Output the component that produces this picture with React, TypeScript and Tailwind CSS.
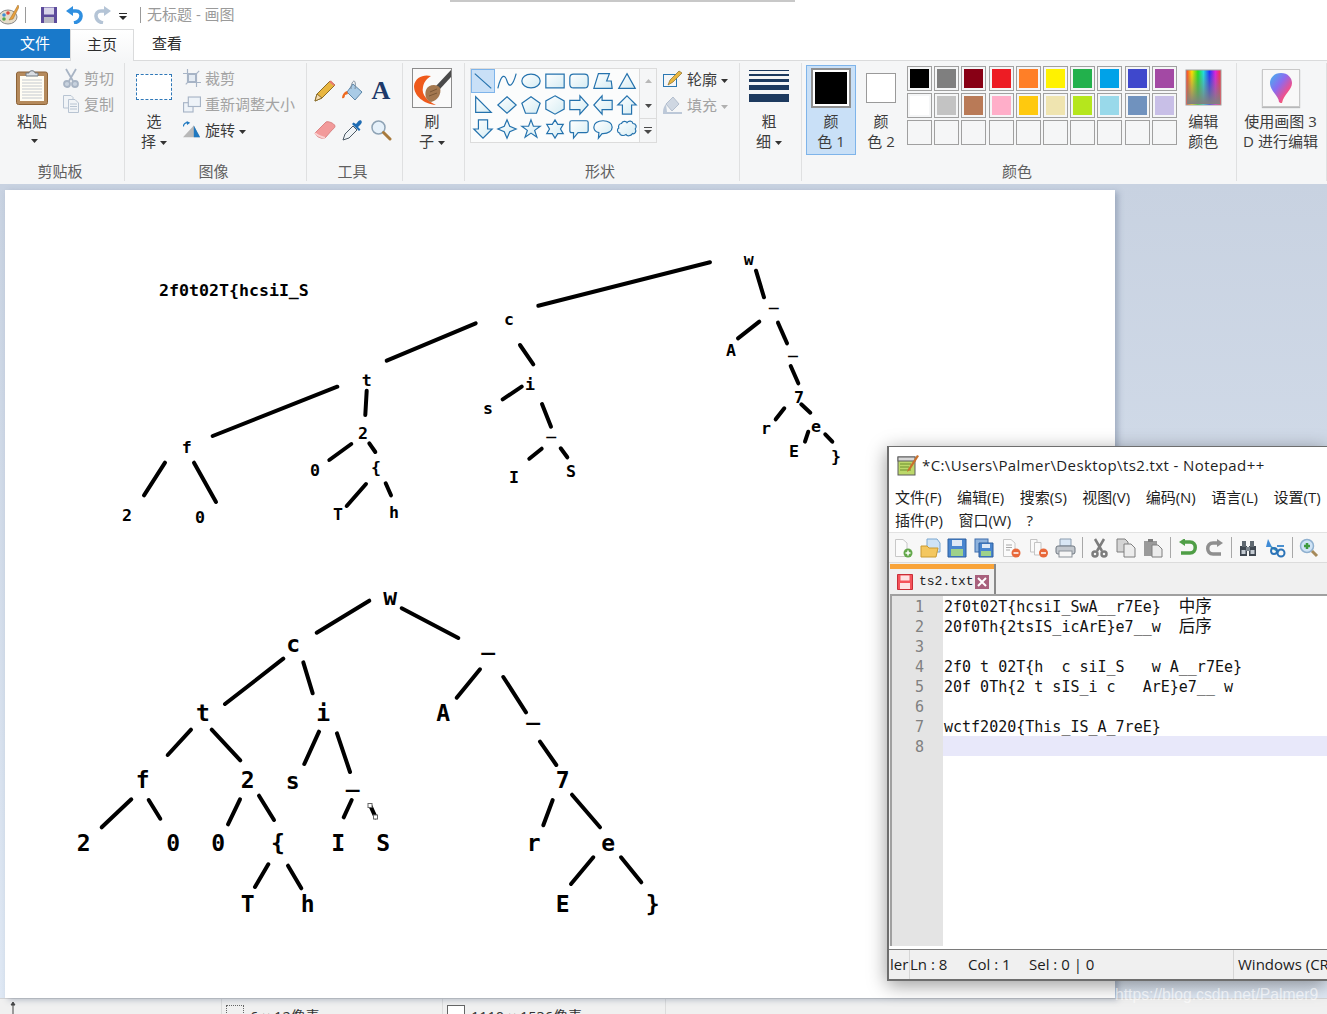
import { ReactNode } from "react"

const SHAPE_STROKE = "#2472ad"

const palette = [
  "#000000", "#7f7f7f", "#880015", "#ed1c24", "#ff7f27", "#fff200", "#22b14c", "#00a2e8", "#3f48cc", "#a349a4",
  "#ffffff", "#c3c3c3", "#b97a57", "#ffaec9", "#ffc90e", "#efe4b0", "#b5e61d", "#99d9ea", "#7092be", "#c8bfe7",
]

const shapes = [
  "M3 4L21 20",
  "M2 20C6 3 10 5 12 12S18 19 22 4",
  "M12 4.5C18 4.5 22 8 22 12S18 19.5 12 19.5 2 16 2 12 6 4.5 12 4.5Z",
  "M2 4.5H22V19.5H2Z",
  "M6 4.5H18Q22 4.5 22 8.5V15.5Q22 19.5 18 19.5H6Q2 19.5 2 15.5V8.5Q2 4.5 6 4.5Z",
  "M2 20L7 4H19L16 12H21L22 20Z",
  "M12 4L21 20H3Z",
  "M4 3V20H21Z",
  "M12 3L22 12L12 21L2 12Z",
  "M12 3L22 10L18 21H6L2 10Z",
  "M12 2L22 7.5V16.5L12 22L2 16.5V7.5Z",
  "M2 7H13V2L22 12L13 22V17H2Z",
  "M22 7H11V2L2 12L11 22V17H22Z",
  "M12 2L22 12H17V22H7V12H2Z",
  "M7 2H17V12H22L12 22L2 12H7Z",
  "M12 2L15 9L22 12L15 15L12 22L9 15L2 12L9 9Z",
  "M12 2L14.6 9H22L16 13.5L18.5 21L12 16.5L5.5 21L8 13.5L2 9H9.4Z",
  "M12 2L15 7H21L18 12L21 17H15L12 22L9 17H3L6 12L3 7H9Z",
  "M4 3H20Q22 3 22 5V14Q22 16 20 16H11L6 22V16H4Q2 16 2 14V5Q2 3 4 3Z",
  "M12 3C18 3 22 6 22 10S18 17 12 17H11L7 22L7.5 16C4 15 2 13 2 10 2 6 6 3 12 3Z",
  "M6 6C7 3 11 3 12 5 14 2.500 18 3 18.500 6 22 6 23 10 21 12 23 15 20 18 18 17 16 20 12 20 11 18 8 20 4 19 4 16.500 1 16 1 12 3 11 2 8 4 6 6 6Z",
]

const lines = [
  // first tree
  [475.7, 323.3, 386.7, 360.7], [337.3, 386.7, 212.7, 436], [366.7, 390.7, 365.3, 415],
  [165, 462.7, 144, 495.3], [194, 462.7, 216, 502], [351.3, 444, 329.3, 460],
  [369.3, 443.3, 375.3, 452], [366, 484, 346.7, 506], [385.7, 483.3, 391, 495.3],
  [710, 262.3, 538.3, 305.7], [756, 270.7, 764, 297.3], [759.3, 321.7, 738, 338.3],
  [778, 322.7, 787, 343.3], [790.7, 366, 798.3, 383.3], [520, 345, 533.3, 364.3],
  [521.7, 386.7, 502.7, 399.3], [542, 404, 551, 426.7], [541.7, 448.7, 529.3, 458.7],
  [560.7, 448.3, 567.3, 457.3], [784.3, 408.3, 775.7, 419.3], [801.3, 404.3, 810.3, 412.7],
  [808.3, 431.7, 805, 441.7], [825.3, 434.3, 832.3, 441.7],
  // second tree
  [369.3, 600.7, 316.7, 632.7], [283.3, 658.7, 225, 704], [303.3, 662.3, 312.7, 693.3],
  [191, 729.7, 167.7, 755], [211.7, 729.7, 240.3, 760.3], [319, 731.7, 304.3, 764],
  [337, 733.3, 350, 772], [131.3, 799.3, 101.7, 827.3], [148.7, 800, 160.3, 818.7],
  [240, 799.3, 228, 824.3], [259, 795.7, 274, 820], [351.7, 800, 343.7, 817.3],
  [370.3, 805.7, 375.7, 817.3], [268.3, 864.3, 255, 887], [288, 865.7, 301.3, 888.3],
  [401.7, 608.3, 458.3, 638], [480, 669.3, 456.7, 697.7], [503.3, 677, 526, 712.3],
  [540, 741.7, 556.3, 765], [552.7, 800, 543.3, 825.3], [572, 794.7, 600, 827.3],
  [593.3, 857.3, 571, 884], [621, 857.3, 641.3, 882.3],
]

const smallLabels: [string, number, number][] = [
  ["w", 748.7, 259], ["_", 773.7, 300], ["c", 509, 319], ["t", 366.7, 380], ["f", 186.7, 447],
  ["2", 363, 433], ["0", 315, 470], ["{", 376, 467], ["2", 127, 515], ["0", 200, 517],
  ["T", 338, 514], ["h", 394, 512], ["i", 530, 384], ["s", 488, 408], ["_", 551.3, 429],
  ["I", 514, 477], ["S", 571, 471], ["A", 731, 350], ["_", 793, 348], ["7", 799, 397],
  ["r", 766, 428], ["e", 816, 426], ["E", 794, 451], ["}", 836, 456],
]

const bigLabels: [string, number, number][] = [
  ["w", 390.3, 597], ["c", 293.3, 644], ["t", 203, 713], ["i", 323.3, 713], ["f", 142.7, 780],
  ["2", 247.7, 780], ["s", 292.7, 781], ["_", 352.7, 779], ["2", 83.7, 843], ["0", 173.3, 843],
  ["0", 218.3, 843], ["{", 278, 843], ["I", 338.3, 843], ["S", 383.3, 843], ["T", 247.7, 904],
  ["h", 307.7, 904], ["_", 488.3, 642], ["A", 443.3, 713], ["_", 533.3, 712], ["7", 562.7, 780],
  ["r", 533.7, 843], ["e", 608.3, 843], ["E", 562.7, 904], ["}", 652.7, 904],
]

const editorLines = [
  ["2f0t02T{hcsiI_SwA__r7Ee}  ", "中序"],
  ["20f0Th{2tsIS_icArE}e7__w  ", "后序"],
  [""],
  ["2f0 t 02T{h  c siI_S   w A__r7Ee}"],
  ["20f 0Th{2 t sIS_i c   ArE}e7__ w"],
  [""],
  ["wctf2020{This_IS_A_7reE}"],
  [""],
]

function Caret({ off }: { off?: boolean }) {
  return (
    <svg width="7" height="4" viewBox="0 0 7 4" className="inline-block ml-[4px] align-middle">
      <path d="M0 0H7L3.500 4Z" fill={off ? "#b0b0b0" : "#333333"} />
    </svg>
  )
}

function Group({ w, label, children }: { w: string; label: string; children: ReactNode }) {
  return (
    <div className={`${w} h-[118px] shrink-0 flex flex-col border-r border-[#dfe0e1]`}>
      <div className="h-[98px] flex">{children}</div>
      <div className="h-[20px] leading-[20px] text-center pr-[4px] text-[15px] text-[#5f5f5f]">{label}</div>
    </div>
  )
}

function TwoLines({ a, b, caret }: { a: string; b: string; caret?: boolean }) {
  return (
    <div className="text-center text-[15px] leading-[20px] text-[#3c3c3c] whitespace-nowrap">
      <div className="h-[20px]">{a}</div>
      <div className="h-[20px]">{b}{caret && <Caret />}</div>
    </div>
  )
}

function SmallRow({ icon, text, off, caret, wide }: { icon: ReactNode; text: string; off?: boolean; caret?: boolean; wide?: boolean }) {
  return (
    <div className={`h-[26px] flex items-center gap-[4px] text-[15px] whitespace-nowrap ${off ? "text-[#a3a3a3]" : "text-[#3c3c3c]"}`}>
      <span className={`${wide ? "w-[20px]" : "w-[18px]"} h-[18px] flex items-center justify-center shrink-0`}>{icon}</span>
      <span>{text}{caret && <Caret off={off} />}</span>
    </div>
  )
}

function Swatch({ color }: { color?: string }) {
  return (
    <div className="w-[25px] h-[25px] border border-[#a0a0a0] p-[2px]">
      {color && <div className="w-full h-full" style={{ backgroundColor: color }} />}
    </div>
  )
}

function Clipboard() {
  return (
    <svg width="32" height="36" viewBox="0 0 32 36">
      <rect x="0.500" y="3" width="31" height="32.500" rx="2" fill="#b58a5c" stroke="#8c6236" />
      <rect x="4" y="7" width="24" height="25" fill="#fffdf4" />
      <path d="M6 11H26M6 14H26M6 17H26M6 20H26M6 23H26M6 26H26M6 29H26" stroke="#c4c9cf" />
      <path d="M10 7V4H13C13 1 19 1 19 4H22V7Z" fill="#d9dde2" stroke="#6f7880" />
    </svg>
  )
}

function Scissors() {
  return (
    <svg width="16" height="20" viewBox="0 0 16 20" fill="none" stroke="#a8b4c4" strokeWidth="1.800">
      <path d="M3 1L10 13M13 1L6 13" />
      <circle cx="4" cy="16" r="3" fill="#c8d2de" />
      <circle cx="12" cy="16" r="3" fill="#c8d2de" />
    </svg>
  )
}

function CopyPages() {
  return (
    <svg width="18" height="20" viewBox="0 0 18 20" fill="#f1f4f7" stroke="#b8c4d2">
      <path d="M1.500 1.500H9L11 3.500V14H1.500Z" />
      <path d="M6.500 5.500H13L16.500 9V18.500H6.500Z" />
      <path d="M8 10H15M8 12.500H15M8 15H15" />
    </svg>
  )
}

function CropIcon() {
  return (
    <svg width="20" height="20" viewBox="0 0 20 20" fill="none" stroke="#a7b4c6" strokeWidth="1.300">
      <path d="M5 0V15H20M0 5H15V20" />
      <path d="M3 17L18 2" />
      <path d="M6 6H14V14H6Z" fill="#e4ebf3" />
    </svg>
  )
}

function ResizeIcon() {
  return (
    <svg width="19" height="17" viewBox="0 0 19 17" fill="#eef3f8" stroke="#a7b4c6" strokeWidth="1.200">
      <rect x="0.600" y="6.600" width="10" height="9.800" />
      <rect x="5.600" y="0.600" width="12.800" height="10" />
    </svg>
  )
}

function RotateIcon() {
  return (
    <svg width="20" height="20" viewBox="0 0 20 20">
      <path d="M19 18H0L12 5Z" fill="#b8b8b8" />
      <path d="M12 5L19 18H12Z" fill="#1f78c0" />
      <path d="M0.500 6C0.500 3 3 1.500 5.500 2" fill="none" stroke="#1f78c0" strokeWidth="1.300" />
      <path d="M4 0L8 2L4.500 4.500Z" fill="#1f78c0" />
    </svg>
  )
}

function PencilTool() {
  return (
    <svg width="22" height="22" viewBox="0 0 22 22">
      <path d="M1 21L3 14L16 1L21 5L8 18Z" fill="#e8b640" stroke="#8a6d2b" />
      <path d="M1 21L3 14L8 18Z" fill="#f5dcb0" stroke="#8a6d2b" />
      <path d="M15 2L20 6L21 5L17 0.500Z" fill="#e87a72" />
    </svg>
  )
}

function FillTool() {
  return (
    <svg width="22" height="22" viewBox="0 0 22 22">
      <path d="M11 4L20 12L13 20L5 12Z" fill="#a9cbe6" stroke="#5c86a8" />
      <path d="M9 9C9 4 11 1 12 1S14 4 13 9" fill="none" stroke="#7d8b99" />
      <path d="M5 11C2 12 0 15 0 18 2 19 3 17 3 15L6 14Z" fill="#ef6a1f" />
    </svg>
  )
}

function PickerTool() {
  return (
    <svg width="22" height="22" viewBox="0 0 22 22">
      <path d="M1 21L3 15L11 7L15 11L7 19Z" fill="#eff3f6" stroke="#4b5965" />
      <path d="M10 5L17 12L18.500 10.500L16 8L19 5C21 3 19 0 16.500 2L14 5L11.500 3.500Z" fill="#1f6cb3" />
    </svg>
  )
}

function MagnifierTool() {
  return (
    <svg width="22" height="22" viewBox="0 0 22 22" fill="none">
      <circle cx="8.500" cy="8.500" r="6.500" fill="#e6f1fa" stroke="#8ea3b5" strokeWidth="1.500" />
      <path d="M13.500 13.500L20 20" stroke="#a87a3c" strokeWidth="3" strokeLinecap="round" />
    </svg>
  )
}

function EraserTool() {
  return (
    <svg width="22" height="20" viewBox="0 0 22 20">
      <path d="M1 13L12 2C14 1 20 3 21 6C21 8 19 9 18 10L11 18C8 19 2 17 1 13Z" fill="#f29a9a" stroke="#d98383" />
      <path d="M1 13C3 16 8 17 11 18" fill="none" stroke="#fbd0d0" strokeWidth="2" />
    </svg>
  )
}

function BrushIcon() {
  return (
    <svg width="40" height="40" viewBox="0 0 40 40">
      <rect x="0.500" y="0.500" width="39" height="39" fill="#fafafa" stroke="#8c8c8c" />
      <path d="M39 2L24 18L28 21L39 9Z" fill="#4a4a4a" />
      <path d="M19 8C12 6 3 9 2 18C2 28 12 36 24 37C16 33 9 27 11 19C12 13 16 10 19 8Z" fill="#ef5a1c" />
      <path d="M14 22C16 17 24 15 28 20C30 26 25 33 19 34C15 33 12 28 14 22Z" fill="#a4784f" />
      <path d="M18 24L25 21M17 28L25 25" stroke="#7c5836" />
    </svg>
  )
}

function Thickness() {
  return (
    <div className="w-[40px] flex flex-col">
      <div className="h-[1px] bg-[#1d3a5f]" />
      <div className="h-[2px] mt-[3px] bg-[#1d3a5f]" />
      <div className="h-[3px] mt-[3px] bg-[#1d3a5f]" />
      <div className="h-[5px] mt-[3px] bg-[#1d3a5f]" />
      <div className="h-[8px] mt-[4px] bg-[#1d3a5f]" />
    </div>
  )
}

function Balloon() {
  return (
    <svg width="24" height="32" viewBox="0 0 24 32">
      <defs>
        <linearGradient id="bal" x1="0" y1="0" x2="1" y2="1">
          <stop offset="0" stopColor="#3fb8ee" />
          <stop offset="0.400" stopColor="#8a6cf0" />
          <stop offset="0.700" stopColor="#ee4f8e" />
          <stop offset="1" stopColor="#f5a122" />
        </linearGradient>
      </defs>
      <path d="M12 1C19 1 23 6 23 11C23 18 15 22 13 31C12 31 11 31 10 30C10 24 1 19 1 11C1 6 5 1 12 1Z" fill="url(#bal)" />
    </svg>
  )
}

function PageIcon({ badge }: { badge?: string }) {
  return (
    <svg width="20" height="20" viewBox="0 0 20 20">
      <path d="M2.500 1.500H10L14 5V18.500H2.500Z" fill="#fbfbfb" stroke="#c8c8c8" />
      {badge === "red" && <path d="M5 7H11M5 9.500H11M5 12H9" stroke="#a8a8a8" />}
      <circle cx="15" cy="15" r="4.500" fill={badge === "red" ? "#e8683a" : "#63a84b"} />
      <path d={badge === "red" ? "M12.500 15H17.500" : "M12.500 15H17.500M15 12.500V17.500"} stroke="#fff" strokeWidth="1.500" />
    </svg>
  )
}

function Disk({ small }: { small?: boolean }) {
  return (
    <svg width="20" height="20" viewBox="0 0 20 20">
      {small && <rect x="1" y="1" width="13" height="13" fill="#8fb3dd" stroke="#3f6fae" />}
      <path d={small ? "M5 5H19V19H5Z" : "M1 1H19V19H1Z"} fill="#4a86cf" stroke="#2c5f9f" />
      <rect x={small ? 8 : 5} y={small ? 6 : 2} width={small ? 8 : 10} height={small ? 4 : 6} fill="#dfe9f5" />
      <rect x={small ? 7 : 4} y={small ? 13 : 11} width={small ? 10 : 12} height={small ? 5 : 7} fill="#9ed18a" />
    </svg>
  )
}

const toolbar: ReactNode[] = [
  <PageIcon />,
  <svg width="21" height="20" viewBox="0 0 21 20"><path d="M7 1H17L20 5V14H7Z" fill="#cfe3f6" stroke="#7ba7d0" /><path d="M1 8H7L9 10H18L16 19H1Z" fill="#f4c75f" stroke="#c99a32" /></svg>,
  <Disk />,
  <Disk small />,
  <PageIcon badge="red" />,
  <svg width="21" height="20" viewBox="0 0 21 20"><path d="M2.500 1.500H9V14H2.500Z" fill="#fafafa" stroke="#c4c4c4" /><path d="M6.500 4.500H13V17H6.500Z" fill="#fafafa" stroke="#c4c4c4" /><circle cx="15.500" cy="15" r="4.500" fill="#e8683a" /><path d="M13 15H18" stroke="#fff" strokeWidth="1.500" /></svg>,
  <svg width="21" height="20" viewBox="0 0 21 20"><path d="M5 1H16V8H5Z" fill="#d9e7f5" stroke="#8b9cae" /><rect x="1" y="8" width="19" height="8" rx="2" fill="#c3c8ce" stroke="#6f7780" /><rect x="4" y="13" width="13" height="6" fill="#f6f6f6" stroke="#8b9299" /></svg>,
  null,
  <svg width="17" height="20" viewBox="0 0 17 20" fill="none" stroke="#7d7d7d" strokeWidth="2.500"><path d="M13 1L6 13M4 1L11 13" /><circle cx="4" cy="16" r="2.500" /><circle cx="13" cy="16" r="2.500" /></svg>,
  <svg width="20" height="20" viewBox="0 0 20 20"><path d="M1 1H9L12 4V14H1Z" fill="#d4d4d4" stroke="#7f7f7f" /><path d="M8 6H15L19 10V19H8Z" fill="#ececec" stroke="#7f7f7f" /></svg>,
  <svg width="20" height="20" viewBox="0 0 20 20"><path d="M1 3H14V18H1Z" fill="#9a9a9a" /><path d="M5 1H10V4H5Z" fill="#7d7d7d" /><path d="M9 7H15L19 11V19H9Z" fill="#ececec" stroke="#7f7f7f" /></svg>,
  null,
  <svg width="19" height="18" viewBox="0 0 19 18" fill="none"><path d="M5 3H12C19 3 19 14 12 14H3" stroke="#4f9e46" strokeWidth="3.500" /><path d="M7 -1V7L1 3Z" fill="#4f9e46" /></svg>,
  <svg width="19" height="18" viewBox="0 0 19 18" fill="none"><path d="M14 4H8C1 4 1 15 8 15H16" stroke="#8f8f8f" strokeWidth="3.500" /><path d="M12 0V8L18 4Z" fill="#8f8f8f" /></svg>,
  null,
  <svg width="18" height="18" viewBox="0 0 18 18"><rect x="1" y="7" width="7" height="10" fill="#3f4750" /><rect x="10" y="7" width="7" height="10" fill="#3f4750" /><rect x="3" y="2" width="4" height="6" fill="#5f6870" /><rect x="11" y="2" width="4" height="6" fill="#5f6870" /><rect x="7" y="8" width="4" height="4" fill="#7f8890" /><rect x="2.500" y="11" width="4" height="4" fill="#c5ccd3" /><rect x="11.500" y="11" width="4" height="4" fill="#c5ccd3" /></svg>,
  <svg width="21" height="20" viewBox="0 0 21 20" fill="none"><path d="M3 1L7 9H1Z" fill="#3f8bd6" /><path d="M6 9L14 14" stroke="#3fa0b0" strokeWidth="2" /><circle cx="9" cy="13" r="3" stroke="#2c74b8" strokeWidth="2" /><circle cx="16" cy="15" r="3.500" stroke="#2c74b8" strokeWidth="2" /><path d="M12 8H19" stroke="#4a90d0" strokeWidth="2" /></svg>,
  null,
  <svg width="20" height="20" viewBox="0 0 20 20" fill="none"><circle cx="8" cy="8" r="6.500" fill="#cfe3f6" stroke="#8fb0cf" strokeWidth="1.500" /><path d="M13 13L18 18" stroke="#a68a5a" strokeWidth="3" /><path d="M5 8H11M8 5V11" stroke="#3f9a3f" strokeWidth="2.500" /></svg>,
]

function Notepad() {
  return (
    <div className="absolute left-[887px] top-[446px] w-[440px] h-[535px] flex flex-col bg-[#f0f0f0] border-l-2 border-t border-b-2 border-[#6e6e6e] shadow-[0_4px_18px_rgba(0,0,0,0.4)] overflow-hidden">
      <div className="h-[38px] shrink-0 bg-white flex items-center pl-[8px] gap-[3px] pb-[2px]">
        <svg width="22" height="22" viewBox="0 0 22 22">
          <rect x="1" y="3" width="17" height="18" fill="#bcd86a" stroke="#5c5c5c" />
          <rect x="1" y="3" width="17" height="4" fill="#d8d8d8" stroke="#5c5c5c" />
          <path d="M3 10H14M3 13H12M3 16H14" stroke="#6b8f2c" />
          <path d="M11 15L20 1L22 2L13 16L10 18Z" fill="#c9702c" />
        </svg>
        <span className="text-[15px] tracking-[0.4px] text-[#1e1e1e] whitespace-nowrap">*C:\Users\Palmer\Desktop\ts2.txt - Notepad++</span>
      </div>
      <div className="h-[47px] shrink-0 bg-white pl-[6px] text-[15px] text-[#1e1e1e] whitespace-nowrap">
        <div className="h-[24px] flex items-center gap-[15.500px]">
          <span>文件(F)</span><span>编辑(E)</span><span>搜索(S)</span><span>视图(V)</span><span>编码(N)</span><span>语言(L)</span><span>设置(T)</span>
        </div>
        <div className="h-[23px] flex items-center gap-[15.500px]">
          <span>插件(P)</span><span>窗口(W)</span><span>?</span>
        </div>
      </div>
      <div className="h-[30px] shrink-0 bg-[#f7f7f7] border-t border-[#e2e2e2] flex items-center pl-[0.500px]">
        {toolbar.map((item, i) =>
          item ? (
            <div key={i} className="w-[27px] flex justify-center">{item}</div>
          ) : (
            <div key={i} className="w-[7px] flex justify-center"><div className="w-px h-[21px] bg-[#a8a8a8]" /></div>
          )
        )}
      </div>
      <div className="h-[32px] shrink-0 border-t border-[#dcdcdc] pl-[1px] pt-[1px]">
        <div className="w-[106px] h-[30px] border-r-2 border-[#8a8a8a]">
          <div className="h-[5px] bg-[#f9a43a]" />
          <div className="h-[25px] flex items-center pl-[7px]">
            <svg width="16" height="16" viewBox="0 0 16 16">
              <path d="M0.500 0.500H15.500V15.500H0.500Z" fill="#f4525a" stroke="#c92f38" />
              <rect x="3.500" y="1.500" width="9" height="5" fill="#fde3e4" />
              <rect x="3" y="9" width="10" height="6" fill="#fde3e4" />
            </svg>
            <span className="ml-[6px] font-['Liberation_Mono',monospace] text-[13px] text-[#222222]">ts2.txt</span>
            <span className="w-[14px] h-[14px] ml-[1px] bg-[#a8607c] flex items-center justify-center">
              <svg width="10" height="10" viewBox="0 0 10 10"><path d="M1 1L9 9M9 1L1 9" stroke="#fff" strokeWidth="2" /></svg>
            </span>
          </div>
        </div>
      </div>
      <div className="flex-1 flex ml-[1px] bg-white border-l-2 border-t-2 border-[#a0a0a0] font-['DejaVu_Sans_Mono','Noto_Sans_CJK_SC',monospace] text-[15px] min-h-0">
        <div className="w-[51px] shrink-0 bg-[#e4e4e4] text-[#808080] text-right pr-[19px]">
          {editorLines.map((_, i) => (
            <div key={i} className="h-[20px] pt-[1px] leading-[20px]">{i + 1}</div>
          ))}
        </div>
        <div className="flex-1 text-[#111111] whitespace-pre">
          {editorLines.map((l, i) => (
            <div key={i} className={`h-[20px] pt-[1px] pl-[1px] leading-[20px] ${i === 7 ? "bg-[#e8e8fa]" : ""}`}>
              {l[0]}{l[1] && <span className="text-[16.500px]">{l[1]}</span>}
            </div>
          ))}
        </div>
      </div>
      <div className="h-[3px] shrink-0 bg-white" />
      <div className="h-px shrink-0 bg-[#7a7a7a]" />
      <div className="h-[29px] shrink-0 flex items-center text-[15px] text-[#1c1c1c] whitespace-pre">
        <div className="w-[21px] h-full shrink-0 flex items-center border-r border-[#d6d6d6] pl-[1px]">ler</div>
        <div className="w-[324px] h-full shrink-0 flex items-center border-r border-[#d6d6d6]">
          <span className="w-[58px]">Ln : 8</span>
          <span className="w-[61px]">Col : 1</span>
          <span>Sel : 0 | 0</span>
        </div>
        <div className="pl-[4px] shrink-0">Windows (CR LF)</div>
      </div>
    </div>
  )
}

export default function App() {
  return (
    <div className="relative w-[1327px] h-[1014px] overflow-hidden flex flex-col bg-white font-['Open_Sans','Noto_Sans_CJK_SC',sans-serif]">
      <div className="absolute left-[450px] top-0 w-[345px] h-[2px] bg-[#c8c8c8]" />

      {/* quick access */}
      <div className="h-[29px] shrink-0 flex items-center">
        <svg width="20" height="20" viewBox="0 0 20 20" className="-ml-[1px]">
          <ellipse cx="9" cy="12" rx="9" ry="7" fill="#e5dcc8" stroke="#8a8a8a" />
          <circle cx="5" cy="10" r="1.800" fill="#3f8fd6" />
          <circle cx="9" cy="8" r="1.800" fill="#e0483a" />
          <circle cx="5" cy="14" r="1.800" fill="#54a84c" />
          <path d="M19 0L12 12L10 15L14 14L20 2Z" fill="#e8a13c" stroke="#96662a" strokeWidth="0.500" />
        </svg>
        <div className="w-px h-[16px] bg-[#9a9a9a] ml-[6px]" />
        <svg width="18" height="18" viewBox="0 0 18 18" className="ml-[14px]">
          <path d="M1 1H17V17H1Z" fill="#5d4c9c" />
          <rect x="4" y="1.500" width="10" height="7" fill="#d8d4ea" />
          <rect x="4" y="11" width="10" height="6" fill="#b9b9c5" />
        </svg>
        <svg width="18" height="18" viewBox="0 0 18 18" fill="none" className="ml-[8px]">
          <path d="M5 5H10C17 5 17 15 8 17" stroke="#2f8fe0" strokeWidth="3.500" />
          <path d="M7 0V10L0 5Z" fill="#2f8fe0" />
        </svg>
        <svg width="18" height="18" viewBox="0 0 18 18" fill="none" className="ml-[9px]">
          <path d="M13 5H8C1 5 1 15 10 17" stroke="#b4c4d6" strokeWidth="3.500" />
          <path d="M11 0V10L18 5Z" fill="#b4c4d6" />
        </svg>
        <svg width="8" height="7" viewBox="0 0 8 7" className="ml-[8px] mt-[3px]">
          <path d="M0 0H8V1H0ZM0 3H8L4 7Z" fill="#2a2a2a" />
        </svg>
        <div className="w-px h-[16px] bg-[#9a9a9a] ml-[13px]" />
        <span className="ml-[6px] text-[15px] text-[#9a9a9a]">无标题 - 画图</span>
      </div>

      {/* tabs */}
      <div className="h-[31px] shrink-0 flex text-[15px]">
        <div className="w-[70px] h-[29px] bg-[#1979ca] text-white flex items-center justify-center">文件</div>
        <div className="w-[64px] h-[32px] pb-[2px] z-10 bg-[#f5f6f7] bg-gradient-to-b from-white to-[#f5f6f7] border-x border-t border-[#dadbdc] text-[#2c2c2c] flex items-center justify-center">主页</div>
        <div className="ml-[18px] h-[29px] text-[#2c2c2c] flex items-center">查看</div>
      </div>

      {/* ribbon */}
      <div className="h-[124px] shrink-0 bg-[#f5f6f7] border-t border-[#dadbdc] pt-[2px] flex">
        <Group w="w-[125px]" label="剪贴板">
          <div className="w-[32px] ml-[16px] pt-[6px] flex flex-col items-center">
            <Clipboard />
            <div className="mt-[6px]"><div className="text-[15px] leading-[20px] text-[#3c3c3c] whitespace-nowrap">粘贴</div></div>
            <div className="h-[20px] flex items-center"><Caret /></div>
          </div>
          <div className="ml-[14px] pt-[2px]">
            <SmallRow off icon={<Scissors />} text="剪切" />
            <SmallRow off icon={<CopyPages />} text="复制" />
          </div>
        </Group>

        <Group w="w-[182px]" label="图像">
          <div className="w-[36px] ml-[11px] pt-[11px] flex flex-col items-center">
            <div className="w-[36px] h-[26px] border border-dashed border-[#2f78b8] bg-white" />
            <div className="mt-[11px]"><TwoLines a="选" b="择" caret /></div>
          </div>
          <div className="ml-[11px] pt-[2px]">
            <SmallRow off icon={<CropIcon />} text="裁剪" />
            <SmallRow off icon={<ResizeIcon />} text="重新调整大小" />
            <SmallRow icon={<RotateIcon />} text="旋转" caret />
          </div>
        </Group>

        <Group w="w-[96px]" label="工具">
          <div className="ml-[4px] pt-[8px] grid grid-cols-[28px_28px_28px] grid-rows-[39px_39px] justify-items-center items-center">
            <PencilTool />
            <FillTool />
            <span className="font-['Liberation_Serif',serif] font-bold text-[26px] leading-none text-[#1d3a6a]">A</span>
            <EraserTool />
            <PickerTool />
            <MagnifierTool />
          </div>
        </Group>

        <Group w="w-[62px]" label="">
          <div className="w-[40px] ml-[9px] pt-[5px] flex flex-col items-center">
            <BrushIcon />
            <div className="mt-[3px]"><TwoLines a="刷" b="子" caret /></div>
          </div>
        </Group>

        <Group w="w-[275px]" label="形状">
          <div className="ml-[5px] mt-[5px] flex h-[75px]">
            <div className="w-[170px] border border-[#dcdcdc] bg-[#fbfcfc] grid grid-cols-[repeat(7,24px)] grid-rows-[repeat(3,24px)]">
              {shapes.map((d, i) => (
                <div key={i} className={`w-[24px] h-[24px] flex items-center justify-center ${i === 0 ? "bg-[#c9e0f7] border border-[#7eb4ea]" : ""}`}>
                  <svg width="22" height="22" viewBox="0 0 24 24">
                    <defs>
                      <linearGradient id={`sg${i}`} x1="0" y1="0" x2="1" y2="1">
                        <stop offset="0" stopColor="#ffffff" />
                        <stop offset="1" stopColor="#d5ecf3" />
                      </linearGradient>
                    </defs>
                    <path d={d} fill={i < 2 ? "none" : `url(#sg${i})`} stroke={SHAPE_STROKE} strokeWidth="1.300" />
                  </svg>
                </div>
              ))}
            </div>
            <div className="w-[17px] border border-l-0 border-[#dcdcdc] flex flex-col items-center text-[#555]">
              <div className="h-[24px] flex items-center"><svg width="7" height="4" viewBox="0 0 7 4"><path d="M3.500 0L7 4H0Z" fill="#b8b8b8" /></svg></div>
              <div className="h-[25px] flex items-center"><svg width="7" height="4" viewBox="0 0 7 4"><path d="M0 0H7L3.500 4Z" fill="#4a4a4a" /></svg></div>
              <div className="h-[24px] flex items-center border-t border-[#dcdcdc] w-full justify-center"><svg width="8" height="7" viewBox="0 0 8 7"><path d="M0 0H8V1H0ZM0 3H8L4 7Z" fill="#4a4a4a" /></svg></div>
            </div>
          </div>
          <div className="ml-[6px] pt-[3px]">
            <SmallRow wide icon={
              <svg width="20" height="18" viewBox="0 0 20 18">
                <rect x="0.500" y="4.500" width="13" height="12" fill="none" stroke="#2b78b3" />
                <path d="M5 15L7 10L16 1L19 3L10 12Z" fill="#e8b640" stroke="#8a6d2b" strokeWidth="0.700" />
              </svg>
            } text="轮廓" caret />
            <SmallRow wide off icon={
              <svg width="20" height="18" viewBox="0 0 20 18">
                <path d="M10 1L16 8L9 15L3 8Z" fill="#cfd7e2" stroke="#b4bfce" />
                <path d="M0 16H19V18H0ZM3 8C1 10 0 13 0 16H4Z" fill="#bcc8d8" />
              </svg>
            } text="填充" caret />
          </div>
        </Group>

        <Group w="w-[62px]" label="">
          <div className="w-[40px] ml-[9px] pt-[7px] flex flex-col items-center">
            <div className="h-[41px]"><Thickness /></div>
            <TwoLines a="粗" b="细" caret />
          </div>
        </Group>

        <Group w="w-[435px]" label="颜色">
          <div className="w-[50px] h-[90px] ml-[4px] mt-[2px] bg-[#c9e0f7] border border-[#7eb4ea] pt-[2px] flex flex-col items-center shrink-0">
            <div className="w-[40px] h-[40px] border-2 border-[#8f8f8f] p-[2px] bg-white"><div className="w-full h-full bg-black" /></div>
            <div className="mt-[3px]"><TwoLines a="颜" b="色 1" /></div>
          </div>
          <div className="w-[50px] pt-[10px] flex flex-col items-center shrink-0">
            <div className="w-[30px] h-[30px] border border-[#9a9a9a] bg-white" />
            <div className="mt-[8px]"><TwoLines a="颜" b="色 2" /></div>
          </div>
          <div className="ml-[1px] mt-[3px] grid grid-cols-[repeat(10,25px)] gap-x-[2.200px] gap-y-[2px] h-fit shrink-0">
            {palette.map((c) => <Swatch key={c} color={c} />)}
            {Array.from({ length: 10 }).map((_, i) => <Swatch key={i} />)}
          </div>
          <div className="w-[37px] ml-[8px] pt-[6px] flex flex-col items-center shrink-0">
            <svg width="37" height="37" viewBox="0 0 37 37">
              <defs>
                <linearGradient id="rain" x1="0" y1="0" x2="1" y2="0">
                  <stop offset="0" stopColor="#ff3030" />
                  <stop offset="0.170" stopColor="#ffe000" />
                  <stop offset="0.340" stopColor="#20e020" />
                  <stop offset="0.500" stopColor="#20e0e0" />
                  <stop offset="0.670" stopColor="#2030ff" />
                  <stop offset="0.840" stopColor="#e020e0" />
                  <stop offset="1" stopColor="#ff3030" />
                </linearGradient>
                <linearGradient id="fade" x1="0" y1="0" x2="0" y2="1">
                  <stop offset="0" stopColor="#808080" stopOpacity="0" />
                  <stop offset="1" stopColor="#808080" stopOpacity="1" />
                </linearGradient>
              </defs>
              <rect x="1" y="1" width="35" height="35" fill="url(#rain)" stroke="#a0a0a0" />
              <rect x="2" y="2" width="33" height="33" fill="url(#fade)" />
            </svg>
            <div className="mt-[5px]"><TwoLines a="编辑" b="颜色" /></div>
          </div>
        </Group>

        <Group w="w-[90px]" label="">
          <div className="w-full pt-[6px] pr-[2px] flex flex-col items-center">
            <div className="w-[38px] h-[38px] border border-[#c8c8c8] bg-[#f8f8f8] shadow-[0_1px_1px_rgba(0,0,0,0.25)] flex items-center justify-center"><Balloon /></div>
            <div className="mt-[4px]"><TwoLines a="使用画图 3" b="D 进行编辑" /></div>
          </div>
        </Group>
      </div>

      {/* canvas area */}
      <div className="h-[814px] shrink-0 bg-gradient-to-b from-[#c8d2e1] to-[#dfe8f4] pl-[5px] pt-[6px]">
        <div className="relative w-[1110px] h-[808px] bg-white shadow-[3px_2px_6px_rgba(70,90,120,0.35)] overflow-hidden">
          <svg width="1110" height="808" viewBox="5 190 1110 808" className="absolute inset-0">
            {lines.map(([x1, y1, x2, y2], i) => (
              <line key={i} x1={x1} y1={y1} x2={x2} y2={y2} stroke="#000000" strokeWidth="4" strokeLinecap="round" />
            ))}
            <rect x="368" y="803.500" width="4" height="4" fill="#fff" stroke="#666" />
            <rect x="373.500" y="815" width="4" height="4" fill="#fff" stroke="#666" />
          </svg>
          <div className="absolute left-[154px] top-[91px] text-[16.600px] leading-[20px] font-bold text-black font-['DejaVu_Sans_Mono',monospace] whitespace-pre">2f0t02T&#123;hcsiI_S</div>
          {smallLabels.map(([t, x, y], i) => (
            <span key={i} className="absolute w-[20px] -ml-[10px] h-[20px] -mt-[9px] text-center text-[16.600px] leading-[20px] font-bold text-black font-['DejaVu_Sans_Mono',monospace]" style={{ left: x - 5, top: y - 190 }}>{t}</span>
          ))}
          {bigLabels.map(([t, x, y], i) => (
            <span key={i} className="absolute w-[30px] -ml-[15px] h-[30px] -mt-[15px] text-center text-[23px] leading-[30px] font-bold text-black font-['DejaVu_Sans_Mono',monospace]" style={{ left: x - 5, top: y - 190 }}>{t}</span>
          ))}
        </div>
      </div>

      {/* status bar */}
      <div className="h-[16px] shrink-0 bg-[#f0f0f0] border-t border-[#d4d4d4] flex overflow-hidden text-[14.500px] text-[#333333] whitespace-nowrap">
        <div className="w-[222px] border-r border-[#dcdcdc] pl-[4px] pt-[3px]">
          <svg width="18" height="14" viewBox="0 0 18 14" fill="none" stroke="#444"><path d="M9 2V14M5 13H13" /><path d="M9 0L11 3H7Z" fill="#444" /></svg>
        </div>
        <div className="w-[221px] border-r border-[#dcdcdc] pl-[4px] pt-[6px] flex gap-[6px]">
          <div className="w-[18px] h-[16px] border border-dotted border-[#666] shrink-0" />
          <span className="leading-[20px] mt-[2px]">6 × 12像素</span>
        </div>
        <div className="w-[223px] border-r border-[#dcdcdc] pl-[4px] pt-[6px] flex gap-[6px]">
          <div className="w-[18px] h-[16px] border border-[#666] bg-white shrink-0" />
          <span className="leading-[20px] mt-[2px]">1110 × 1536像素</span>
        </div>
      </div>

      <Notepad />

      <div className="absolute left-[1115px] top-[985px] text-[15.700px] leading-[20px] text-white/60 font-['Liberation_Sans',sans-serif] whitespace-nowrap">https://blog.csdn.net/Palmer9</div>
    </div>
  )
}
